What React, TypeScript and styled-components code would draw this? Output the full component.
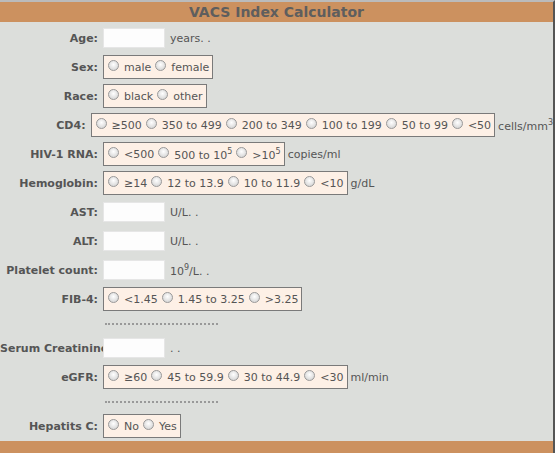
import styled, { createGlobalStyle } from 'styled-components';

const Global = createGlobalStyle`
    html, body { margin: 0; background: #fff; }
    body { font-family: Tahoma, "DejaVu Sans", sans-serif; }
`;

const Page = styled.div`
    width: 555px;
    height: 453px;
    border-right: 2px solid #555;
    border-top: 2px solid #bbb;
    background: #dcdedb;
    display: flex;
    flex-direction: column;
    box-sizing: border-box;
`;

const Header = styled.div`
    height: 21px;
    background: #cc915f;
    color: #5e5e5e;
    font-weight: bold;
    font-size: 14px;
    display: flex;
    align-items: center;
    justify-content: center;
`;

const Body = styled.div`
    flex: 1;
    padding-top: 2px;
`;

const Row = styled.div<{ $h?: number }>`
    height: ${(p) => p.$h ?? 29}px;
    display: flex;
    align-items: center;
    font-size: 11px;
    color: #555;
`;

const Label = styled.div`
    width: 103px;
    text-align: right;
    font-weight: bold;
    padding-right: 5px;
    box-sizing: border-box;
    white-space: nowrap;
`;

const Input = styled.div`
    width: 62px;
    height: 20px;
    background: #fdfdfd;
    border: 1px solid #e6e6e6;
    box-sizing: border-box;
    margin-right: 5px;
`;

const Group = styled.div`
    height: 24px;
    display: flex;
    align-items: center;
    gap: 4px;
    padding: 0 3px 0 4px;
    background: #fdf0e6;
    border: 1px solid #7a7a7a;
    box-sizing: border-box;
    margin-right: 3px;
`;

const Option = styled.label`
    display: flex;
    align-items: center;
    gap: 5px;
    white-space: nowrap;
`;

const Radio = styled.span`
    width: 9px;
    height: 9px;
    border-radius: 50%;
    border: 1px solid #999;
    background: radial-gradient(circle at 50% 40%, #fff, #ccc);
    margin-top: -3px;
`;

const Unit = styled.span`
    white-space: nowrap;
`;

const Dotted = styled.div`
    margin-left: 105px;
    width: 113px;
    border-top: 2px dotted #999;
    height: 0;
`;

const Footer = styled.div`
    height: 13px;
    background: #cc915f;
`;

type Field = { label: string; kind: 'input' | 'radio' | 'dots'; options?: React.ReactNode[]; unit?: React.ReactNode };

const fields: Field[] = [
    { label: 'Age:', kind: 'input', unit: 'years. .' },
    { label: 'Sex:', kind: 'radio', options: ['male', 'female'] },
    { label: 'Race:', kind: 'radio', options: ['black', 'other'] },
    { label: 'CD4:', kind: 'radio', options: ['≥500', '350 to 499', '200 to 349', '100 to 199', '50 to 99', '<50'], unit: <>cells/mm<sup style={{ fontSize: 8 }}>3</sup></> },
    { label: 'HIV-1 RNA:', kind: 'radio', options: ['<500', <>500 to 10<sup style={{ fontSize: 8 }}>5</sup></>, <>&gt;10<sup style={{ fontSize: 8 }}>5</sup></>], unit: 'copies/ml' },
    { label: 'Hemoglobin:', kind: 'radio', options: ['≥14', '12 to 13.9', '10 to 11.9', '<10'], unit: 'g/dL' },
    { label: 'AST:', kind: 'input', unit: 'U/L. .' },
    { label: 'ALT:', kind: 'input', unit: 'U/L. .' },
    { label: 'Platelet count:', kind: 'input', unit: <>10<sup style={{ fontSize: 8 }}>9</sup>/L. .</> },
    { label: 'FIB-4:', kind: 'radio', options: ['<1.45', '1.45 to 3.25', '>3.25'] },
    { label: '', kind: 'dots' },
    { label: 'Serum Creatinine:', kind: 'input', unit: '. .' },
    { label: 'eGFR:', kind: 'radio', options: ['≥60', '45 to 59.9', '30 to 44.9', '<30'], unit: 'ml/min' },
    { label: '', kind: 'dots' },
    { label: 'Hepatits C:', kind: 'radio', options: ['No', 'Yes'] },
];

export default function App() {
    return (
        <Page>
            <Global />
            <Header>VACS Index Calculator</Header>
            <Body>
                {fields.map((f, i) =>
                    f.kind === 'dots' ? (
                        <Row key={i} $h={20}>
                            <Dotted />
                        </Row>
                    ) : (
                        <Row key={i}>
                            <Label>{f.label}</Label>
                            {f.kind === 'input' ? (
                                <Input />
                            ) : (
                                <Group>
                                    {f.options!.map((o, j) => (
                                        <Option key={j}>
                                            <Radio />
                                            <span>{o}</span>
                                        </Option>
                                    ))}
                                </Group>
                            )}
                            {f.unit && <Unit>{f.unit}</Unit>}
                        </Row>
                    )
                )}
            </Body>
            <Footer />
        </Page>
    );
}
